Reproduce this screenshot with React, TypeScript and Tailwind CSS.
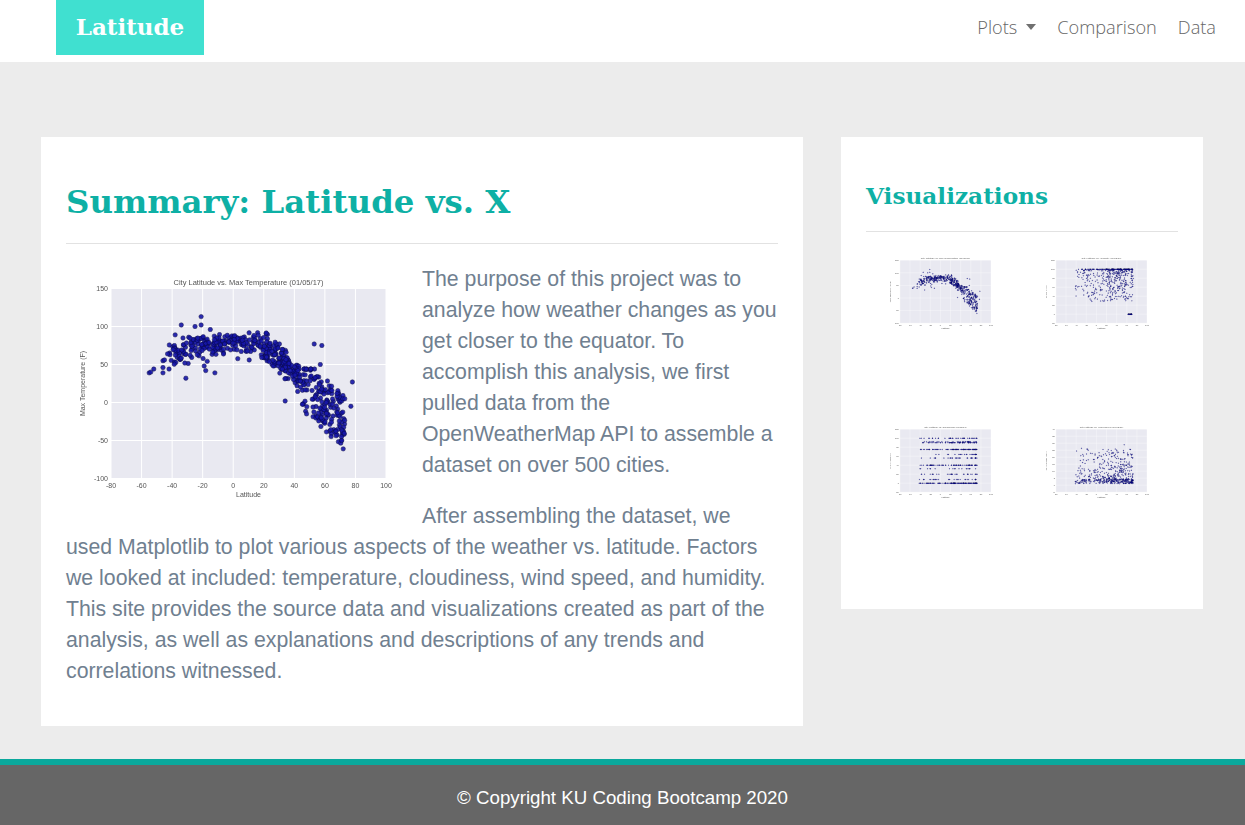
const serif = "font-['DejaVu_Serif',Georgia,serif]";

type Kind = "temp" | "humidity" | "cloud" | "wind";

// seeded so the scatter is the same on every load
function rng(seed: number) {
  let a = seed;
  return () => {
    a = (a + 0x6d2b79f5) | 0;
    let t = Math.imul(a ^ (a >>> 15), 1 | a);
    t = (t + Math.imul(t ^ (t >>> 7), 61 | t)) ^ t;
    return ((t ^ (t >>> 14)) >>> 0) / 4294967296;
  };
}

function randomLat(r: () => number) {
  const u = r();
  if (u < 0.08) return -42 + r() * 17;
  if (u < 0.36) return -25 + r() * 45;
  if (u < 0.96) return 20 + r() * 52;
  return 68 + r() * 5;
}

function tempAt(lat: number, r: () => number) {
  const n = r() + r() - 1;
  if (lat < -20) return 76 + (lat + 20) * 0.7 + n * 20;
  if (lat < 18) return (r() < 0.08 ? 62 : 79) + n * 14;
  if (lat < 45) return 79 - (lat - 18) * 1.9 + n * 22;
  return Math.max(-60, Math.min(44, 28 - (lat - 45) * 2 + (r() - 0.5) * 72));
}

function makePoints(kind: Kind): [number, number][] {
  const r = rng(kind.length * 97 + kind.charCodeAt(0));
  const pts: [number, number][] = [];
  for (let i = 0; i < 540; i++) {
    const lat = randomLat(r);
    if (kind === "temp") {
      pts.push([lat, tempAt(lat, r)]);
    } else if (kind === "humidity") {
      const u = r();
      if (u < 0.2 && lat > -30) pts.push([lat, 100]);
      else if (u < 0.23) pts.push([62 + r() * 8, 0]);
      else pts.push([lat, 100 - Math.pow(r(), 1.8) * 72]);
    } else if (kind === "cloud") {
      const levels = [0, 0, 0, 0, 8, 20, 32, 40, 40, 56, 64, 75, 75, 75, 90, 90, 92, 100];
      pts.push([lat, levels[Math.floor(r() * levels.length)]]);
    } else {
      pts.push([lat, 1 + r() * 3 + Math.pow(r(), 3.5) * 24 + (lat > 45 && r() < 0.04 ? 12 : 0)]);
    }
  }
  if (kind === "temp") {
    const extra: [number, number][] = [
      [-21, 113], [-34, 102], [-21, 102], [-25, 100], [-15, 96], [-38, 89], [-55, 39], [-54, 40],
      [-52, 44], [-46, 39], [-46, 46], [-46, 55], [-45, 56], [-43, 64], [-42, 44], [-31, 32],
      [-12, 39], [-19, 48], [-18, 42], [53, 77], [58, 75], [57, 50], [78, 27], [77, -5], [73, 5],
      [72, -61], [71, -50], [34, 2], [48, -15],
    ];
    pts.push(...extra);
  }
  return pts;
}

const CHARTS: Record<Kind, { title: string; label: string; yMin: number; yMax: number; step: number }> = {
  temp: { title: "City Latitude vs. Max Temperature (01/05/17)", label: "Max Temperature (F)", yMin: -100, yMax: 150, step: 50 },
  humidity: { title: "City Latitude vs. Humidity (01/05/17)", label: "Humidity (%)", yMin: -20, yMax: 120, step: 20 },
  cloud: { title: "City Latitude vs. Cloudiness (01/05/17)", label: "Cloudiness (%)", yMin: -20, yMax: 120, step: 20 },
  wind: { title: "City Latitude vs. Wind Speed (01/05/17)", label: "Wind Speed (mph)", yMin: -5, yMax: 40, step: 5 },
};

const X_TICKS = [-80, -60, -40, -20, 0, 20, 40, 60, 80, 100];
const L = 45;
const R = 320;
const T = 18.5;
const B = 208.5;

function Scatter({ kind, className, blur, dot }: { kind: Kind; className: string; blur: number; dot: number }) {
  const c = CHARTS[kind];
  const sx = (v: number) => L + ((v + 80) / 180) * (R - L);
  const sy = (v: number) => B - ((v - c.yMin) / (c.yMax - c.yMin)) * (B - T);
  const yTicks: number[] = [];
  for (let v = c.yMin; v <= c.yMax; v += c.step) yTicks.push(v);
  const filterId = `soft-${kind}-${dot}`;
  return (
    <svg viewBox="0 0 344 235" className={className}>
      <defs>
        <filter id={filterId} x="-5%" y="-5%" width="110%" height="110%">
          <feGaussianBlur stdDeviation={blur} />
        </filter>
      </defs>
      <g filter={`url(#${filterId})`}>
        <rect x={L} y={T} width={R - L} height={B - T} fill="#e9e9f1" />
        {X_TICKS.map((v) => (
          <line key={v} x1={sx(v)} x2={sx(v)} y1={T} y2={B} stroke="#ffffff" strokeWidth="1" />
        ))}
        {yTicks.map((v) => (
          <line key={v} x1={L} x2={R} y1={sy(v)} y2={sy(v)} stroke="#ffffff" strokeWidth="1" />
        ))}
        {makePoints(kind).map(([x, y], i) => (
          <circle key={i} cx={sx(x)} cy={sy(y)} r={dot} fill="#1616a8" stroke="#0a0a3c" strokeWidth="0.5" opacity="0.9" />
        ))}
        <g fontFamily="'Liberation Sans', Arial, sans-serif" fontSize="7" fill="#555555">
          {X_TICKS.map((v) => (
            <text key={v} x={sx(v)} y={218} textAnchor="middle">
              {v}
            </text>
          ))}
          {yTicks.map((v) => (
            <text key={v} x={L - 3} y={sy(v) + 2.5} textAnchor="end">
              {v}
            </text>
          ))}
          <text x={(L + R) / 2} y={227} textAnchor="middle">
            Latitude
          </text>
          <text x={(L + R) / 2} y={15} textAnchor="middle" fontSize="7.5">
            {c.title}
          </text>
          <text transform={`translate(19 ${(T + B) / 2}) rotate(-90)`} textAnchor="middle">
            {c.label}
          </text>
        </g>
      </g>
    </svg>
  );
}

export default function App() {
  return (
    <div className="min-h-screen bg-[#ececec] font-['Liberation_Sans',Arial,sans-serif]">
      {/* Navbar */}
      <nav className="flex h-[62px] items-start justify-between bg-white pl-[56px] pr-[29px]">
        <a className={`flex h-[55px] w-[148px] items-center justify-center bg-[#40e0d0] text-[23px] font-bold text-white ${serif}`}>
          Latitude
        </a>
        <div className="flex h-[55px] items-center gap-[21px] font-['Open_Sans',sans-serif] text-[18.2px] font-light text-[#666666]">
          <a className="flex items-center gap-[9px]">
            Plots
            <span className="h-0 w-0 border-x-[5.5px] border-t-[6px] border-x-transparent border-t-[#707070]" />
          </a>
          <a>Comparison</a>
          <a>Data</a>
        </div>
      </nav>

      {/* Main content */}
      <main className="flex items-start gap-[38px] pb-[33px] pl-[41px] pt-[75px]">
        <section className="w-[762px] bg-white px-[25px] pb-[19px]">
          <h1 className={`mt-[45px] text-[32.4px] font-bold leading-[40px] text-[#0eb0a5] ${serif}`}>
            Summary: Latitude vs. X
          </h1>
          <hr className="mt-[21px] border-t border-[#e2e2e2]" />
          <div className="pt-[19.5px] text-[21.28px] leading-[31px] text-[#708090]">
            <Scatter kind="temp" blur={0.35} dot={2.2} className="float-left mr-[12px] mt-[6px] h-[235px] w-[344px]" />
            <p className="mb-[20px]">
              The purpose of this project was to analyze how weather changes as you get closer to the equator. To
              accomplish this analysis, we first pulled data from the OpenWeatherMap API to assemble a dataset on over
              500 cities.
            </p>
            <p className="mb-[20px]">
              After assembling the dataset, we used Matplotlib to plot various aspects of the weather vs. latitude.
              Factors we looked at included: temperature, cloudiness, wind speed, and humidity. This site provides the
              source data and visualizations created as part of the analysis, as well as explanations and descriptions
              of any trends and correlations witnessed.
            </p>
          </div>
        </section>

        <aside className="w-[362px] bg-white px-[25px] pb-[17px]">
          <h2 className={`mt-[44px] text-[23.2px] font-bold leading-[30px] text-[#0eb0a5] ${serif}`}>Visualizations</h2>
          <hr className="mt-[20px] border-t border-[#e2e2e2]" />
          <div className="mt-[22px] grid grid-cols-[156px_137px] pl-[19px]">
            {(["temp", "humidity", "cloud", "wind"] as Kind[]).map((kind) => (
              <div key={kind} className="h-[169px]">
                <Scatter kind={kind} blur={1.7} dot={1.5} className="h-[78px] w-[114px]" />
              </div>
            ))}
          </div>
        </aside>
      </main>

      {/* Footer */}
      <footer className="flex h-[66px] items-center justify-center border-t-[6px] border-[#0aa89c] bg-[#666666] pt-[7px] text-[18.72px] text-white">
        © Copyright KU Coding Bootcamp 2020
      </footer>
    </div>
  );
}
